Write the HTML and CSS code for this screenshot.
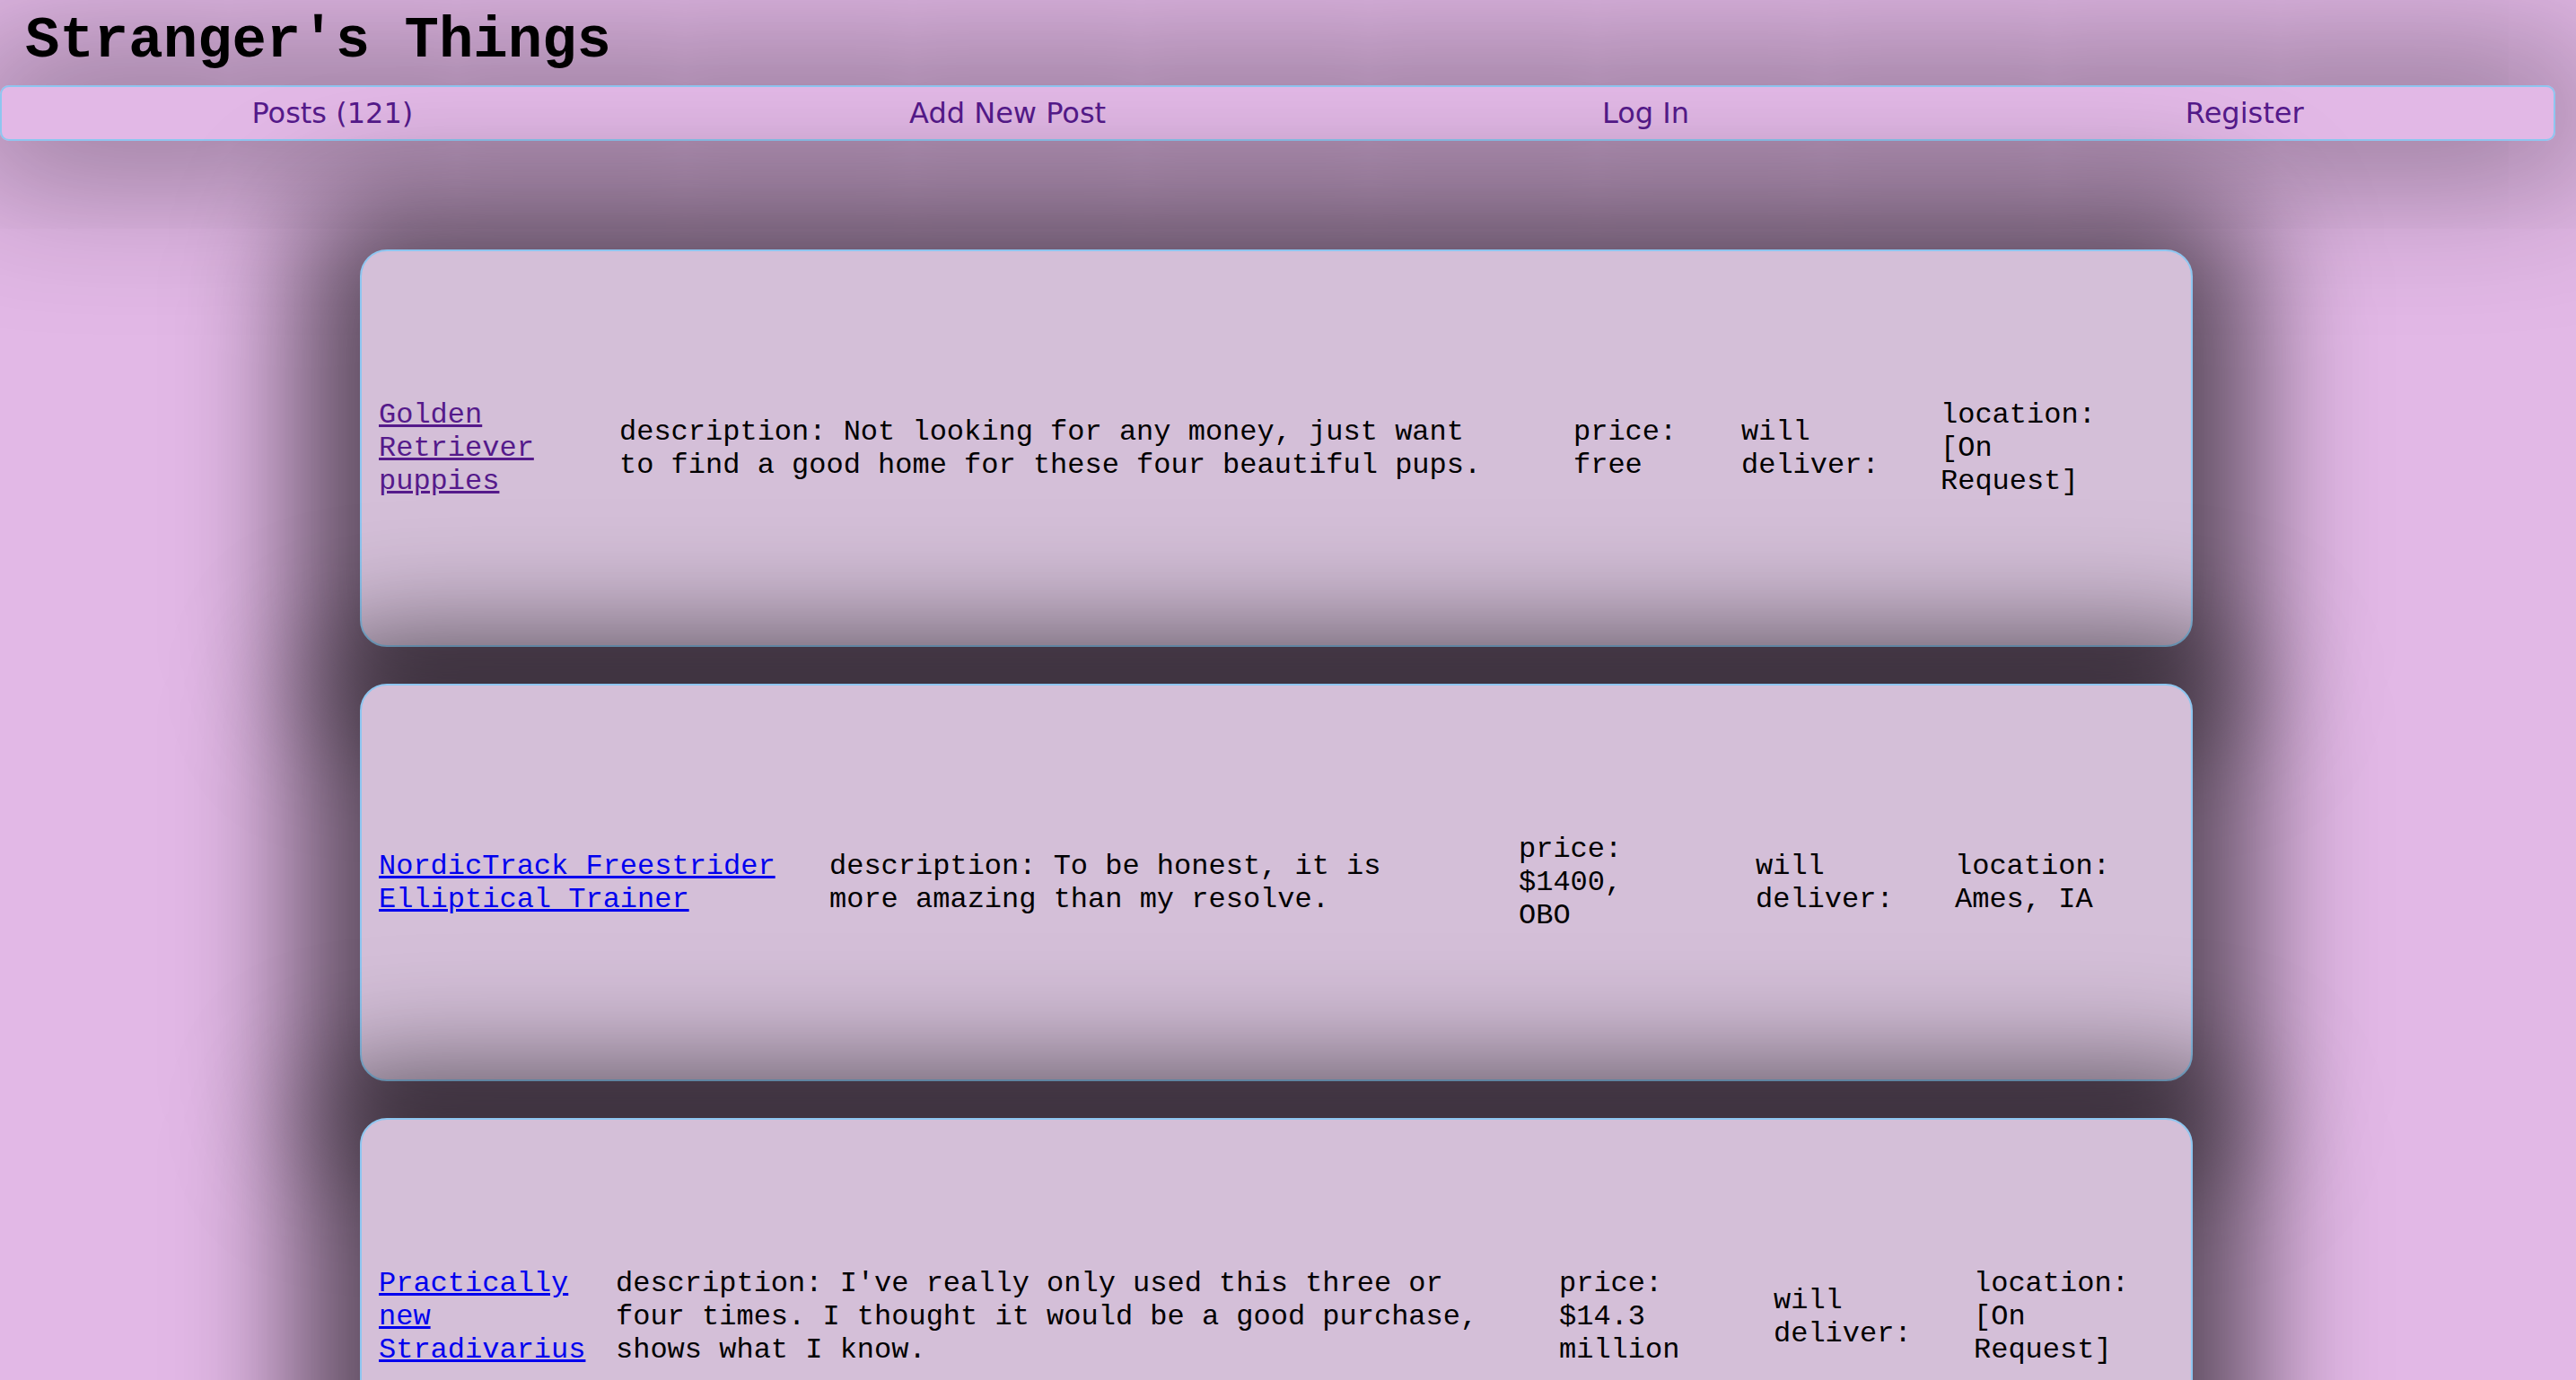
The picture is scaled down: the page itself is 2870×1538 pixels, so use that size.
FILE: index.html
```html
<!DOCTYPE html>
<html lang="en">
<head>
<meta charset="utf-8">
<title>Stranger's Things</title>
<link rel="stylesheet" href="styles.css">
</head>
<body>
<header class="site-header">
  <h1 class="site-title">Stranger's Things</h1>
  <nav class="site-nav">
    <a class="site-nav__link" href="#posts">Posts (121)</a>
    <a class="site-nav__link" href="#new">Add New Post</a>
    <a class="site-nav__link" href="#login">Log In</a>
    <a class="site-nav__link" href="#register">Register</a>
  </nav>
</header>
<main class="posts" id="posts">
  <article class="post post--pups">
    <a class="post__title post__title--visited" href="#p1">Golden Retriever puppies</a>
    <div class="post__desc">description: Not looking for any money, just want to find a good home for these four beautiful pups.</div>
    <div class="post__price">price: free</div>
    <div class="post__deliver">will deliver:</div>
    <div class="post__location">location: [On Request]</div>
  </article>
  <article class="post post--nordic">
    <a class="post__title" href="#p2">NordicTrack Freestrider Elliptical Trainer</a>
    <div class="post__desc">description: To be honest, it is more amazing than my resolve.</div>
    <div class="post__price">price: $1400, OBO</div>
    <div class="post__deliver">will deliver:</div>
    <div class="post__location">location: Ames, IA</div>
  </article>
  <article class="post post--violin">
    <a class="post__title" href="#p3">Practically new Stradivarius</a>
    <div class="post__desc">description: I've really only used this three or four times. I thought it would be a good purchase, shows what I know.</div>
    <div class="post__price">price: $14.3 million</div>
    <div class="post__deliver">will deliver:</div>
    <div class="post__location">location: [On Request]</div>
  </article>
</main>
</body>
</html>
```
FILE: styles.css
```css
html {
  scrollbar-width: none;
}

body {
  margin: 0;
  background: #e2b8e6;
  font-family: "Liberation Mono", "Courier New", monospace;
  font-size: 32px;
  color: #000;
}

.site-header {
  padding-right: 23px;
}

.site-title {
  margin: 0;
  padding: 10px 0 0 28px;
  font-family: "Liberation Mono", "Courier New", monospace;
  font-size: 64px;
  font-weight: bold;
  line-height: 72px;
}

.site-nav {
  margin-top: 13px;
  display: flex;
  justify-content: space-around;
  padding: 10px 2px;
  border: 2px solid #8ec6f0;
  border-radius: 10px;
  box-shadow: 0 0 160px 40px rgba(0, 0, 0, 0.38);
}

.site-nav__link {
  font-family: "DejaVu Sans", Verdana, sans-serif;
  font-size: 32px;
  color: #551a8b;
  text-decoration: none;
}

.posts {
  margin-right: 26px;
  padding: 121px 0 40px;
  display: flex;
  flex-direction: column;
  align-items: center;
  gap: 41px;
}

.post {
  box-sizing: border-box;
  width: 2042px;
  height: 443px;
  padding: 0 19px;
  display: flex;
  align-items: center;
  background: #d4bfd8;
  border: 2px solid #8ec6f0;
  border-radius: 30px;
  box-shadow: 0 20px 130px 70px rgba(0, 0, 0, 0.6);
}

.post > * {
  flex: none;
}

.post__title {
  color: #0000ee;
}

.post__title--visited {
  color: #551a8b;
}

/* Golden Retriever puppies */
.post--pups .post__title { width: 230px; margin-right: 38px; }
.post--pups .post__desc { width: 970px; margin-right: 93px; }
.post--pups .post__price { width: 150px; margin-right: 37px; }
.post--pups .post__deliver { width: 180px; margin-right: 42px; }
.post--pups .post__location { width: 200px; }

/* NordicTrack */
.post--nordic .post__title { width: 480px; margin-right: 22px; }
.post--nordic .post__desc { width: 680px; margin-right: 88px; }
.post--nordic .post__price { width: 160px; margin-right: 104px; }
.post--nordic .post__deliver { width: 180px; margin-right: 42px; }
.post--nordic .post__location { width: 220px; }

/* Stradivarius */
.post--violin .post__title { width: 250px; margin-right: 14px; }
.post--violin .post__desc { width: 990px; margin-right: 61px; }
.post--violin .post__price { width: 180px; margin-right: 59px; }
.post--violin .post__deliver { width: 180px; margin-right: 43px; }
.post--violin .post__location { width: 200px; }
```
